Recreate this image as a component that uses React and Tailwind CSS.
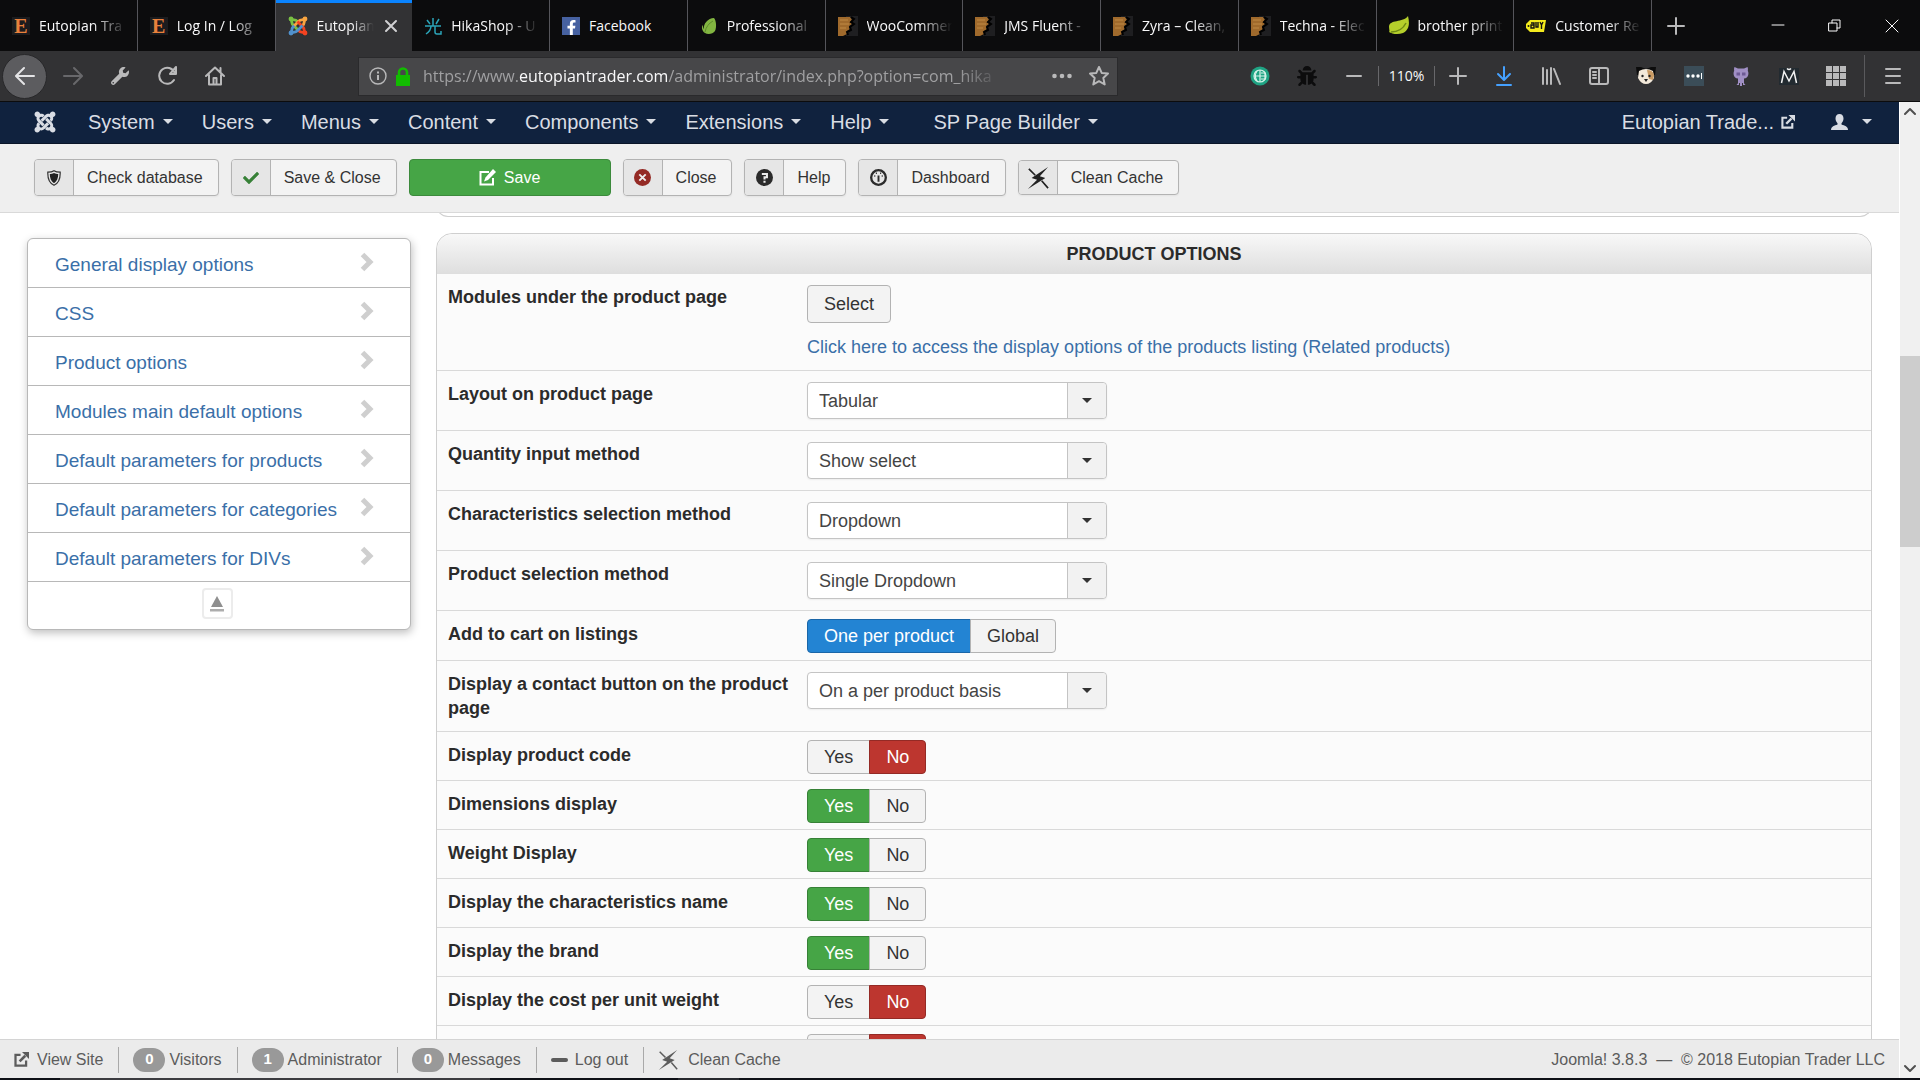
import React, { useState } from 'react';
import { FaJoomla, FaBug, FaWrench, FaCheck, FaFacebookF } from 'react-icons/fa';

/* ---------- Icons ---------- */

const JoomlaColor = () => (
  <svg viewBox="0 0 24 24" className="size-5 shrink-0" fill="none" strokeWidth="3.4">
    {[
      ['#7ac143', 0],
      ['#f9a541', 90],
      ['#f44321', 180],
      ['#5091cd', 270],
    ].map(([color, turn]) => (
      <g key={color} stroke={color} transform={`rotate(${turn} 12 12)`}>
        <circle cx="3.6" cy="3.6" r="2.9" fill={color} stroke="none" />
        <path d="M4 4 L4.6 7.6 Q4.8 9.6 6.4 11.2 L12.6 17.4" />
        <path d="M4 4 L7.6 4.6 Q9.6 4.8 11 6.2 L12.4 7.6" />
      </g>
    ))}
  </svg>
);

const EtsyMark = () => (
  <span className="flex size-[18px] shrink-0 items-center justify-center bg-[#1c1c1e] font-['Liberation_Serif',serif] text-xl font-bold leading-none text-[#e9813c]">
    E
  </span>
);

const HikaMark = () => (
  <svg viewBox="0 0 18 18" className="size-[18px] shrink-0" fill="none" stroke="#2ba4b8" strokeWidth="1.5">
    <path d="M9 1v8M3 3l3 4M15 2l-3 5M1 9h16M7 9c0 4-2 6-5 8M11 9v6q0 2 2 2h4v-3" />
  </svg>
);

const FacebookMark = () => (
  <span className="flex size-[18px] shrink-0 items-end justify-center bg-[#4661a0] text-white">
    <FaFacebookF size={15} />
  </span>
);

const EnvatoMark = () => (
  <svg viewBox="0 0 18 18" className="size-[18px] shrink-0">
    <path d="M14 1c2 2 3 9 1 13-2 3-7 4-10 2-3-2-4-6-2-8 0 2 0 3 1 4C3 7 8 1 14 1z" fill="#82b541" />
    <path d="M13 4C9 6 6 10 5 15" stroke="#5f8a2c" fill="none" />
  </svg>
);

const ForestMark = () => (
  <svg viewBox="0 0 20 20" className="size-5 shrink-0">
    <path d="M8 0h12v20H8z" fill="#1f1f21" />
    <path d="M0 1h12l2 3-2 2 2 2-3 2 1 3-3 2v3l-4 2H0z" fill="#a06a2c" />
    <path d="M2 4h8M2 8h9M2 12h6" stroke="#c08a45" />
    <path d="M13 1l3 2-3 3 3 2-4 3 1 3-4 2 1 3" stroke="#000" strokeWidth="2" fill="none" />
  </svg>
);

const LeafMark = () => (
  <svg viewBox="0 0 20 20" className="size-5 shrink-0">
    <path d="M19 0c2 8 1 14-5 17-5 2-11 1-14-1 1-1 0-3 0-5 0-8 14-4 19-11z" fill="#b5cf2b" />
    <path d="M2 16c6 0 12-3 15-9" stroke="#6e8a14" strokeWidth="1.5" fill="none" />
  </svg>
);

const TagMark = () => (
  <svg viewBox="0 0 20 14" className="h-3.5 w-5 shrink-0">
    <path d="M4 1h16l-2 12H4L0 9V5z" fill="#f3ea1d" />
    <path d="M5 4h3v2H5v3h3V6M10 3v5h2V3M14 3l1.500 3L17 3M15.500 6v4" stroke="#111" strokeWidth="1.400" fill="none" />
    <circle cx="2.500" cy="7" r="1" fill="#111" />
  </svg>
);

const ExternalIcon = ({ className }) => (
  <svg viewBox="0 0 16 16" className={className} fill="none" stroke="currentColor" strokeWidth="2.4">
    <path d="M7 3.100H1.600v11.300h11.300V9" />
    <path d="M6 10l6-6" strokeWidth="2.800" />
    <path d="M8.500 0H16v7.500z" fill="currentColor" stroke="none" />
  </svg>
);

const EditIcon = () => (
  <svg viewBox="0 0 17 17" className="size-[17px]" fill="none" stroke="currentColor" strokeWidth="2">
    <path d="M10 3H1.500v12.500H14V9" />
    <path d="M14 0l3 3-8 8-4 1.500L6.500 8.500z" fill="currentColor" stroke="none" />
  </svg>
);

const ShieldIcon = () => (
  <svg viewBox="0 0 14 16" className="h-4 w-3.5">
    <path d="M7 .7c2 1.300 4 1.500 6.200 1.500C13.400 8 12 13 7 15.300 2 13 .6 8 .8 2.200 3 2.200 5 2 7 .7z" fill="none" stroke="#333" strokeWidth="1.200" />
    <path d="M7 3c1.500.9 2.800 1 4.200 1.100C11.200 8 10 11.500 7 13.200 4 11.500 2.800 8 2.800 4.100 4.200 4 5.500 3.900 7 3z" fill="#222" />
  </svg>
);

const CloseCircle = () => (
  <svg viewBox="0 0 16 16" className="size-[17px]">
    <circle cx="8" cy="8" r="8" fill="#942a25" />
    <path d="M5 5l6 6M11 5l-6 6" stroke="#eee" strokeWidth="1.800" />
  </svg>
);

const HelpCircle = () => (
  <svg viewBox="0 0 16 16" className="size-[17px]">
    <circle cx="8" cy="8" r="8" fill="#2b2b2b" />
    <path d="M5.500 4.600h4.800v3.200H8v2" stroke="#eee" strokeWidth="1.900" fill="none" />
    <path d="M7 11h2v2H7z" fill="#eee" />
  </svg>
);

const DashIcon = () => (
  <svg viewBox="0 0 16 16" className="size-[17px]" fill="none" stroke="#2b2b2b">
    <circle cx="8" cy="8" r="6.900" strokeWidth="2.200" />
    <path d="M8 6v6" strokeWidth="1.800" />
    <path d="M4 6.500h1M11 6.500h1M5.500 4h1M9.500 4h1" strokeWidth="1.400" />
  </svg>
);

const BoltIcon = ({ className }) => (
  <svg viewBox="0 0 24 24" className={className}>
    <path d="M23 0L5 12l6 2L1 24l19-12-6-2z" fill="currentColor" />
    <path d="M2 2l7 7M16 15l7 8" stroke="currentColor" strokeWidth="1.800" />
  </svg>
);

const UserIcon = () => (
  <svg viewBox="0 0 17 16" className="h-4 w-[17px]" fill="currentColor">
    <path d="M8.500 0c2.600 0 4 1.800 4 4.500 0 2-1 3.800-2 4.700v1.300c3 1 6.500 2 6.500 5.500H0c0-3.500 3.500-4.500 6.500-5.500V9.200c-1-.9-2-2.700-2-4.700C4.500 1.800 5.900 0 8.500 0z" />
  </svg>
);

const Caret = () => (
  <svg viewBox="0 0 10 5" className="h-[5px] w-2.5 shrink-0" fill="currentColor">
    <path d="M0 0h10L5 5z" />
  </svg>
);

const Stroke = ({ d, box = 20, width = 2, className = 'size-5', color = 'currentColor' }) => (
  <svg viewBox={`0 0 ${box} ${box}`} className={className} fill="none" stroke={color} strokeWidth={width} strokeLinecap="round" strokeLinejoin="round">
    <path d={d} />
  </svg>
);

const GlobeIcon = () => (
  <svg viewBox="0 0 20 20" className="size-5" fill="none" stroke="#d8f3ea" strokeWidth="1.200">
    <circle cx="10" cy="10" r="9.500" fill="#1fa383" stroke="none" />
    <circle cx="10" cy="10" r="6" />
    <path d="M10 4v12M4 10h12M7 5c-2 3-2 7 0 10M11 7h4v3h-3 3v3h-4" />
  </svg>
);

const DogIcon = () => (
  <svg viewBox="0 0 20 20" className="size-5">
    <path d="M0 1l5 0 5 2 5-2 5 0-1 8H1z" fill="#0c0c0c" />
    <path d="M3 5q7-4 14 0l1 7q-3 6-8 6t-8-6z" fill="#f3e9da" />
    <path d="M11 4q6 0 7 5l-1 5-4-1z" fill="#c99a63" />
    <circle cx="6.500" cy="10" r="1.200" fill="#222" />
    <circle cx="13.500" cy="10" r="1.200" fill="#222" />
    <path d="M8 13h4l-2 3z" fill="#222" />
  </svg>
);

const MoreKeyIcon = () => (
  <svg viewBox="0 0 20 20" className="size-5">
    <path d="M0 0h20v20H0z" fill="#3b4d58" />
    <path d="M17.500 7v6" stroke="#fff" />
    <circle cx="4" cy="10" r="1.700" fill="#fff" />
    <circle cx="9" cy="10" r="1.700" fill="#fff" />
    <circle cx="14" cy="10" r="1.700" fill="#fff" />
  </svg>
);

const OctoIcon = () => (
  <svg viewBox="0 0 16 20" className="h-5 w-4">
    <path d="M1.500 1l3.500 1.500h6L14.500 1c.6 1.500.5 2.800.3 3.700C16 7 15.800 12 11 12.500V17c0 1 1 1 1.500 2H10v-2H9v3H7v-3H6v2H3.500C4 18 5 18 5 17v-4.500C.2 12 0 7 1.200 4.700 1 3.800.9 2.500 1.500 1z" fill="#a08fc4" />
    <path d="M3.500 6.500h3.500v3H3.500zM9 6.500h3.500v3H9z" fill="#6d5a94" />
  </svg>
);

const GridIcon = () => (
  <svg viewBox="0 0 20 20" className="size-5" fill="#b9b9ba">
    {[0, 7, 14].map((y) => [0, 7, 14].map((x) => <rect key={`${x}-${y}`} x={x} y={y} width="6" height="6" />))}
  </svg>
);

const MonsterIcon = () => (
  <svg viewBox="0 0 20 20" className="size-5" fill="none" stroke="#f2f2f2" strokeWidth="1.500">
    <path d="M0 2h20v17H0z" fill="#222a30" stroke="none" />
    <path d="M2.500 17L5 5.500 10 15l5-9.500L17.500 17M8 2.500q2 2 4 0" />
  </svg>
);

/* ---------- Data ---------- */

const TABS = [
  { title: 'Eutopian Tra', icon: <EtsyMark /> },
  { title: 'Log In / Log', icon: <EtsyMark /> },
  { title: 'Eutopian', icon: <JoomlaColor />, active: true },
  { title: 'HikaShop - U', icon: <HikaMark /> },
  { title: 'Facebook', icon: <FacebookMark />, full: true },
  { title: 'Professional', icon: <EnvatoMark /> },
  { title: 'WooCommer', icon: <ForestMark /> },
  { title: 'JMS Fluent -', icon: <ForestMark /> },
  { title: 'Zyra – Clean,', icon: <ForestMark /> },
  { title: 'Techna - Elec', icon: <ForestMark /> },
  { title: 'brother print', icon: <LeafMark /> },
  { title: 'Customer Re', icon: <TagMark /> },
];

const MENU = ['System', 'Users', 'Menus', 'Content', 'Components', 'Extensions', 'Help'];

const SIDE_LINKS = [
  'General display options',
  'CSS',
  'Product options',
  'Modules main default options',
  'Default parameters for products',
  'Default parameters for categories',
  'Default parameters for DIVs',
];

const SELECT_ROWS = [
  ['Layout on product page', 'Tabular'],
  ['Quantity input method', 'Show select'],
  ['Characteristics selection method', 'Dropdown'],
  ['Product selection method', 'Single Dropdown'],
];

const SWITCH_ROWS = [
  ['Display product code', 'No'],
  ['Dimensions display', 'Yes'],
  ['Weight Display', 'Yes'],
  ['Display the characteristics name', 'Yes'],
  ['Display the brand', 'Yes'],
  ['Display the cost per unit weight', 'No'],
];

/* ---------- Browser chrome ---------- */

const TabStrip = () => (
  <div className="flex h-[51px] shrink-0 bg-[#0c0c0d] font-['Open_Sans',sans-serif] text-sm text-[#f9f9fa]">
    <div className="flex min-w-0 flex-1" role="tablist">
      {TABS.map((tab, i) => (
        <div
          key={i}
          role="tab"
          aria-selected={!!tab.active}
          className={`flex min-w-0 flex-1 items-center gap-[9px] pl-3 pr-2 ${
            tab.active ? 'bg-[#323234] shadow-[inset_0_3px_0_#0a84ff]' : 'border-r border-r-[#55555a]'
          }`}
        >
          {tab.icon}
          <span
            className={`min-w-0 flex-1 overflow-hidden whitespace-nowrap ${
              tab.full ? '' : '[mask-image:linear-gradient(to_right,#000_60%,transparent_98%)]'
            }`}
          >
            {tab.title}
          </span>
          {tab.active && (
            <button type="button" aria-label="Close tab" className="mr-1.5 text-[#d0d0d2]">
              <Stroke d="M2 2l10 10M12 2L2 12" box={14} className="size-3.5" />
            </button>
          )}
        </div>
      ))}
    </div>
    <div className="flex w-[268px] items-center">
      <button type="button" aria-label="New tab" className="ml-[15px] text-[#b9b9ba]">
        <Stroke d="M9 1v16M1 9h16" box={18} className="size-[18px]" />
      </button>
      <div className="ml-auto flex items-center gap-[43px] pr-[21px]">
        <button type="button" aria-label="Minimize"><Stroke d="M1 6h12" box={14} width={1} className="size-3.5" /></button>
        <button type="button" aria-label="Restore"><Stroke d="M1 4h8v8H1zM4 4V1h8v8H9" box={14} width={1} className="size-3.5" /></button>
        <button type="button" aria-label="Close window"><Stroke d="M1 1l12 12M13 1L1 13" box={14} width={1} className="size-3.5" /></button>
      </div>
    </div>
  </div>
);

const ToolButton = ({ label, children }) => (
  <button type="button" aria-label={label} className="flex min-w-0 flex-1 items-center justify-center">
    {children}
  </button>
);

const AddressBar = () => (
  <div className="flex h-[51px] shrink-0 items-center border-b border-[#0c0c0d] bg-[#323234] font-['Open_Sans',sans-serif] text-[#b9b9ba]">
    <button type="button" aria-label="Back" className="ml-0.5 flex size-[45px] shrink-0 items-center justify-center rounded-full border border-[#28282a] bg-[#5c5c5f] text-[#e4e4e6]">
      <Stroke d="M19 10H2M9 2l-8 8 8 8" />
    </button>
    <div className="ml-0.5 flex w-[190px] shrink-0">
      <ToolButton label="Forward"><span className="text-[#68686b]"><Stroke d="M1 10h17M11 2l8 8-8 8" /></span></ToolButton>
      <ToolButton label="Developer tools"><FaWrench size={18} /></ToolButton>
      <ToolButton label="Reload"><Stroke d="M16 14a8 8 0 1 1 .5-7.500M18 1v7h-6z" width={2} /></ToolButton>
      <ToolButton label="Home"><Stroke d="M1 10l9-8.500L19 10M4 9v9.500h12V9M8.500 18v-6h3v6M15.500 6V2" width={2} /></ToolButton>
    </div>
    <div className="ml-auto flex h-[39px] w-[760px] shrink items-center border border-[#2a2a2c] bg-[#474749] pl-2.5 pr-2">
      <button type="button" aria-label="Site information">
        <svg viewBox="0 0 18 18" className="size-[18px]" fill="none" stroke="#b9b9ba" strokeWidth="1.400">
          <circle cx="9" cy="9" r="8" />
          <path d="M9 8v5M9 4.500v2" strokeWidth="2" />
        </svg>
      </button>
      <svg viewBox="0 0 16 19" className="ml-2 h-[19px] w-4 shrink-0">
        <path d="M1 8h14v11H1z" fill="#12bc00" />
        <path d="M4 9V5.500a4 4 0 0 1 8 0V9" fill="none" stroke="#12bc00" strokeWidth="2.600" />
      </svg>
      <div
        role="textbox"
        aria-label="Address"
        contentEditable
        suppressContentEditableWarning
        spellCheck={false}
        className="ml-3 w-[580px] min-w-0 overflow-hidden whitespace-nowrap text-base text-[#a0a0a2] [mask-image:linear-gradient(to_right,#000_92%,transparent_100%)]"
      >
        https://www.<span className="text-[#f9f9fa]">eutopiantrader.com</span>/administrator/index.php?option=com_hika
      </div>
      <button type="button" aria-label="Page actions" className="ml-auto">
        <svg viewBox="0 0 20 6" className="h-1.5 w-5" fill="#b9b9ba">
          <circle cx="2.500" cy="3" r="2.300" /><circle cx="10" cy="3" r="2.300" /><circle cx="17.500" cy="3" r="2.300" />
        </svg>
      </button>
      <button type="button" aria-label="Bookmark" className="ml-[17px]">
        <Stroke d="M10 1l2.700 5.900 6.300.7-4.700 4.300 1.400 6.600L10 15.200 4.300 18.500l1.400-6.600L1 7.600l6.300-.7z" />
      </button>
    </div>
    <div className="ml-[118px] flex w-[142px] shrink-0">
      <ToolButton label="Translate"><GlobeIcon /></ToolButton>
      <ToolButton label="Debug"><FaBug size={20} color="#0c0c0d" /></ToolButton>
      <ToolButton label="Zoom out"><Stroke d="M3 10h14" /></ToolButton>
    </div>
    <button type="button" className="h-5 w-[57px] shrink-0 border-x border-[#68686b] text-sm leading-5 text-[#f9f9fa]">110%</button>
    <div className="flex w-[45px] shrink-0">
      <ToolButton label="Zoom in"><Stroke d="M10 2v16M2 10h16" /></ToolButton>
    </div>
    <div className="flex w-[380px] shrink-0">
      <ToolButton label="Downloads"><Stroke d="M10 1v12M4 8l6 6 6-6M3 19h14" color="#45a1ff" /></ToolButton>
      <ToolButton label="Library"><Stroke d="M2 2v16M6 4v14M10 2v16M13 3l6 15" /></ToolButton>
      <ToolButton label="Sidebar"><Stroke d="M3 2h14q2 0 2 2v12q0 2-2 2H3q-2 0-2-2V4q0-2 2-2zM10 2v16M4 6h3M4 9h3M4 12h3" width={2} /></ToolButton>
      <ToolButton label="Dog"><DogIcon /></ToolButton>
      <ToolButton label="Passwords"><MoreKeyIcon /></ToolButton>
      <ToolButton label="Octo"><OctoIcon /></ToolButton>
      <ToolButton label="Monster"><MonsterIcon /></ToolButton>
      <ToolButton label="Apps"><GridIcon /></ToolButton>
    </div>
    <div className="ml-1 h-[42px] w-px shrink-0 bg-[#5a5a5d]" />
    <div className="flex w-[55px] shrink-0">
      <ToolButton label="Open menu"><Stroke d="M3 3h14M3 10h14M3 17h14" /></ToolButton>
    </div>
  </div>
);

/* ---------- Admin page ---------- */

const AdminNav = () => (
  <nav className="flex h-[42px] shrink-0 items-center border-b border-[#0a1528] bg-[#10223e] pb-0.5 pl-[33px] pr-[27px] text-xl leading-6 text-[#d9dde4]">
    <a href="#home" aria-label="Home" className="mr-[31px]"><FaJoomla size={24} /></a>
    <div className="flex gap-[29px]">
      {MENU.map((item) => (
        <a key={item} href={`#${item}`} className="flex items-center gap-2">{item}<Caret /></a>
      ))}
    </div>
    <a href="#builder" className="ml-11 flex items-center gap-2">SP Page Builder<Caret /></a>
    <a href="#site" className="ml-auto flex items-center gap-[7px]">Eutopian Trade...<ExternalIcon className="size-3.5" /></a>
    <button type="button" aria-label="User menu" className="ml-9 flex items-center gap-3.5"><UserIcon /><Caret /></button>
  </nav>
);

const BarButton = ({ icon, children, small }) => (
  <button
    type="button"
    className={`flex overflow-hidden rounded border border-[#b3b3b3] bg-[#f3f3f3] text-[#333] shadow-[0_1px_2px_rgba(0,0,0,0.05)] ${small ? 'h-[35px]' : 'h-[37px]'}`}
  >
    <span className="flex h-full w-[39px] items-center justify-center border-r border-[#b3b3b3] bg-[#e6e6e6]">{icon}</span>
    <span className="flex h-full items-center pl-[13px] pr-[15px]">{children}</span>
  </button>
);

const Toolbar = () => (
  <div className="flex h-[69px] shrink-0 items-center gap-3 border-b border-[#d9d9d9] bg-[#efefef] pb-px pl-[34px] text-base">
    <BarButton icon={<ShieldIcon />}>Check database</BarButton>
    <BarButton icon={<FaCheck size={16} color="#378137" />}>Save &amp; Close</BarButton>
    <button type="button" className="flex h-[37px] w-[202px] items-center justify-center gap-2 rounded border border-[#3c8a3c] bg-[#46a546] text-white">
      <EditIcon />Save
    </button>
    <BarButton icon={<CloseCircle />}>Close</BarButton>
    <BarButton icon={<HelpCircle />}>Help</BarButton>
    <BarButton icon={<DashIcon />}>Dashboard</BarButton>
    <BarButton small icon={<BoltIcon className="size-[22px] text-[#222]" />}>Clean Cache</BarButton>
  </div>
);

const SideMenu = () => (
  <aside className="mt-[25px] w-[384px] shrink-0 rounded-md border border-[#b8b8b8] bg-white shadow-[1px_3px_8px_rgba(0,0,0,0.25)]">
    {SIDE_LINKS.map((link) => (
      <a key={link} href="#options" className="flex h-[49px] items-center justify-between border-b border-[#b8b8b8] pl-[27px] pr-9 pt-1 text-[19px] leading-6 text-[#3a6fa8]">
        {link}
        <svg viewBox="0 0 14 20" className="mb-1.5 h-5 w-3.5 shrink-0">
          <path d="M2.500 2.500L10 10l-7.500 7.500" fill="none" stroke="#cfcfcf" strokeWidth="5" />
        </svg>
      </a>
    ))}
    <div className="flex h-[47px] justify-center pr-1 pt-1.5">
      <button type="button" aria-label="Collapse" className="flex size-[31px] items-center justify-center rounded border-2 border-[#ececec] bg-white">
        <svg viewBox="0 0 14 16" className="h-4 w-3.5">
          <path d="M7 0l6 11H1z" fill="#8f8f8f" />
          <path d="M0 13h14v2.500H0z" fill="#adadad" />
        </svg>
      </button>
    </div>
  </aside>
);

const Row = ({ label, htmlFor, children, className = 'pt-[11px] pb-[11px]' }) => (
  <div className="flex border-b border-[#d9d9d9] pl-[11px]">
    <label htmlFor={htmlFor} className="w-[359px] shrink-0 pb-[11px] pr-3 pt-[11px] font-bold">{label}</label>
    <div className={`flex-1 ${className}`}>{children}</div>
  </div>
);

const SelectBox = ({ id, value }) => (
  <div className="relative w-[300px]">
    <select id={id} defaultValue={value} className="block h-[37px] w-full appearance-none rounded border border-[#c4c4c4] bg-white pl-[11px] pr-12 text-[#444] shadow-[0_1px_2px_rgba(0,0,0,0.06)]">
      <option>{value}</option>
    </select>
    <span className="pointer-events-none absolute inset-y-px right-px flex w-[39px] items-center justify-center rounded-r border-l border-[#c4c4c4] bg-[#f2f2f2] text-[#333]">
      <Caret />
    </span>
  </div>
);

const TONES = {
  Yes: 'border-[#378137] bg-[#46a546] text-white',
  No: 'border-[#942a25] bg-[#bd362f] text-white',
  'One per product': 'border-[#1a66a8] bg-[#2384d3] text-white',
};

const Toggle = ({ name, options, initial }) => {
  const [value, setValue] = useState(initial);
  return (
    <div className="flex" role="radiogroup" aria-label={name}>
      {options.map((option) => (
        <label
          key={option}
          className={`relative -ml-px flex h-[34px] items-center border px-4 first:ml-0 first:rounded-l last:rounded-r ${
            value === option ? TONES[option] || TONES.Yes : 'border-[#b3b3b3] bg-[#f3f3f3] text-[#333]'
          }`}
        >
          <input type="radio" className="sr-only" name={name} checked={value === option} onChange={() => setValue(option)} />
          {option}
        </label>
      ))}
    </div>
  );
};

const ProductOptions = () => (
  <section className="rounded-t-2xl border border-[#cfcfcf] bg-[#fbfbfb] text-lg leading-6 text-[#2b2b2b]">
    <h2 className="flex h-10 items-center justify-center rounded-t-2xl bg-linear-to-b from-[#f8f8f8] to-[#dedede] font-bold">
      PRODUCT OPTIONS
    </h2>
    <Row label="Modules under the product page" htmlFor="modules">
      <button id="modules" type="button" className="block h-[38px] rounded border border-[#b3b3b3] bg-[#f3f3f3] px-4 text-[#333]">Select</button>
      <a href="#related" className="mt-3 block text-[#3a6fa8]">
        Click here to access the display options of the products listing (Related products)
      </a>
    </Row>
    {SELECT_ROWS.map(([label, value]) => (
      <Row key={label} label={label} htmlFor={label}><SelectBox id={label} value={value} /></Row>
    ))}
    <Row label="Add to cart on listings" className="pb-[7px] pt-2">
      <Toggle name="Add to cart on listings" options={['One per product', 'Global']} initial="One per product" />
    </Row>
    <Row label="Display a contact button on the product page" htmlFor="contact">
      <SelectBox id="contact" value="On a per product basis" />
    </Row>
    {SWITCH_ROWS.map(([label, value]) => (
      <Row key={label} label={label} className="pb-1.5 pt-2">
        <Toggle name={label} options={['Yes', 'No']} initial={value} />
      </Row>
    ))}
    <Row label="" className="pb-1.5 pt-2">
      <Toggle name="next" options={['Yes', 'No']} initial="No" />
    </Row>
  </section>
);

const Divider = () => <span className="ml-[15px] mr-3.5 h-[26px] w-px bg-[#a9a9a9]" />;

const Counter = ({ count, children }) => (
  <span className="flex items-center gap-1">
    <span className="flex h-6 w-8 items-center justify-center rounded-full bg-[#999] text-[15px] font-bold text-white">{count}</span>
    {children}
  </span>
);

const StatusBar = () => (
  <footer className="flex h-[39px] shrink-0 items-center border-t border-[#d4d4d4] bg-[#ebebeb] px-3.5 pt-px text-base text-[#5c5c5c]">
    <a href="#view" className="flex items-center gap-2"><ExternalIcon className="size-[15px]" />View Site</a>
    <Divider />
    <Counter count={0}>Visitors</Counter>
    <Divider />
    <Counter count={1}>Administrator</Counter>
    <Divider />
    <Counter count={0}>Messages</Counter>
    <Divider />
    <a href="#logout" className="flex items-center gap-[7px]"><span className="h-1 w-[17px] rounded-sm bg-[#5c5c5c]" />Log out</a>
    <Divider />
    <a href="#cache" className="flex items-center gap-2.5"><BoltIcon className="size-5" />Clean Cache</a>
    <span className="ml-auto">Joomla! 3.8.3 &nbsp;—&nbsp; © 2018 Eutopian Trader LLC</span>
  </footer>
);

const ScrollBar = () => (
  <div className="flex w-[21px] shrink-0 flex-col items-center border-l border-white bg-[#f0f0f0] text-[#505050]">
    <div className="flex h-[21px] items-center"><Stroke d="M1 7l5-5 5 5" box={12} width={2} className="size-3" /></div>
    <div className="flex-[233]" />
    <div className="w-full flex-[191] bg-[#cdcdcd]" />
    <div className="flex-[510]" />
    <div className="flex h-[21px] items-center"><Stroke d="M1 4l5 5 5-5" box={12} width={2} className="size-3" /></div>
  </div>
);

export default function App() {
  return (
    <div className="flex h-screen flex-col overflow-hidden bg-white font-['Liberation_Sans',Arial,sans-serif]">
      <TabStrip />
      <AddressBar />
      <div className="flex min-h-0 flex-1">
        <div className="flex min-w-0 flex-1 flex-col">
          <AdminNav />
          <Toolbar />
          <main className="flex min-h-0 flex-1 items-start gap-[25px] overflow-hidden px-[27px]">
            <SideMenu />
            <div className="min-w-0 flex-1">
              <div className="-mt-3 mb-4 h-4 rounded-b-xl border border-t-0 border-[#cfcfcf]" />
              <ProductOptions />
            </div>
          </main>
          <StatusBar />
        </div>
        <ScrollBar />
      </div>
      <div className="flex h-0.5 shrink-0 bg-[#0e1016]">
        <div className="ml-[60px] w-[430px] bg-[#3c3c40]" />
        <div className="ml-[188px] w-[61px] bg-[#26282d]" />
      </div>
    </div>
  );
}
